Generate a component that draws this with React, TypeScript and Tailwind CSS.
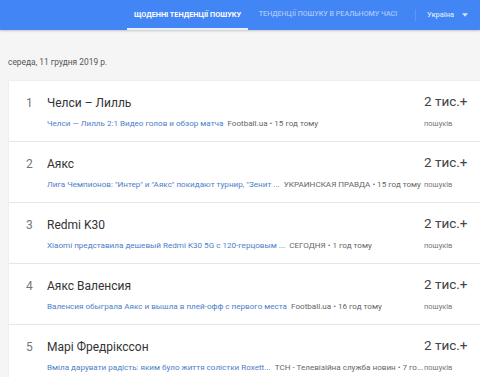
import React from "react";

type Trend = {
  rank: number;
  title: string;
  link: string;
  source: string;
};

const trends: Trend[] = [
  {
    rank: 1,
    title: "Челси – Лилль",
    link: "Челси — Лилль 2:1 Видео голов и обзор матча",
    source: "Football.ua • 15 год тому",
  },
  {
    rank: 2,
    title: "Аякс",
    link: "Лига Чемпионов: \"Интер\" и \"Аякс\" покидают турнир, \"Зенит ...",
    source: "УКРАИНСКАЯ ПРАВДА • 15 год тому",
  },
  {
    rank: 3,
    title: "Redmi K30",
    link: "Xiaomi представила дешевый Redmi K30 5G с 120-герцовым ...",
    source: "СЕГОДНЯ • 1 год тому",
  },
  {
    rank: 4,
    title: "Аякс Валенсия",
    link: "Валенсия обыграла Аякс и вышла в плей-офф с первого места",
    source: "Football.ua • 16 год тому",
  },
  {
    rank: 5,
    title: "Марі Фредрікссон",
    link: "Вміла дарувати радість: яким було життя солістки Roxett...",
    source: "ТСН - Телевізійна служба новин • 7 го...",
  },
];

export default function App() {
  return (
    <div className="h-[377px] w-[480px] overflow-hidden bg-[#f5f5f5] font-['Roboto',sans-serif]">
      {/* Header */}
      <div className="flex h-[30px] items-stretch bg-[#4285f4] shadow-[0_1px_2px_rgba(0,0,0,0.2)]">
        <div className="w-[127px] shrink-0" />
        <div className="flex w-[121px] shrink-0 items-center justify-center border-b-[2px] border-[#e8f0fe] pt-[2px] text-[7.3px] font-bold whitespace-nowrap text-white">
          ЩОДЕННІ ТЕНДЕНЦІЇ ПОШУКУ
        </div>
        <div className="flex w-[160px] shrink-0 items-center justify-center pb-[1px] text-[7.1px] font-medium whitespace-nowrap text-[#a9c7fb]">
          ТЕНДЕНЦІЇ ПОШУКУ В РЕАЛЬНОМУ ЧАСІ
        </div>
        <div className="my-[9px] ml-[7px] w-px shrink-0 bg-[#5f97f6]" />
        <div className="flex items-center gap-[8px] pl-[11px] pb-[1px] text-[7.5px] font-medium whitespace-nowrap text-[#d6e4fd]">
          <span>Україна</span>
          <svg width="6" height="4" viewBox="0 0 7 4">
            <path d="M0 0h7L3.5 4z" fill="#d6e4fd" />
          </svg>
        </div>
      </div>

      {/* Date */}
      <div className="px-[8px] pt-[26px] pb-[12px] text-[8.4px] text-[#555]">
        середа, 11 грудня 2019 р.
      </div>

      {/* List */}
      <div className="ml-[9px] bg-white shadow-[0_0_1px_rgba(0,0,0,0.15)]">
        {trends.map((t) => (
          <div
            key={t.rank}
            className="flex h-[61px] items-stretch border-b border-[#e6e6e6]"
          >
            <div className="w-[38px] shrink-0 pt-[13px] pl-[17px] text-[12px] text-[#757575]">
              {t.rank}
            </div>
            <div className="flex w-[377px] shrink-0 flex-col pt-[13px]">
              <div className="text-[12px] text-[#333]">{t.title}</div>
              <div className="mt-[5px] flex whitespace-nowrap text-[8.1px]">
                <span className="text-[#4d7ec9]">{t.link}</span>
                <span className="ml-[4px] text-[#666]">{t.source}</span>
              </div>
            </div>
            <div className="flex flex-col pt-[10px]">
              <div className="text-[13.5px] text-[#444]">2 тис.+</div>
              <div className="mt-[7px] text-[7.5px] text-[#777]">пошуків</div>
            </div>
          </div>
        ))}
      </div>
    </div>
  );
}
